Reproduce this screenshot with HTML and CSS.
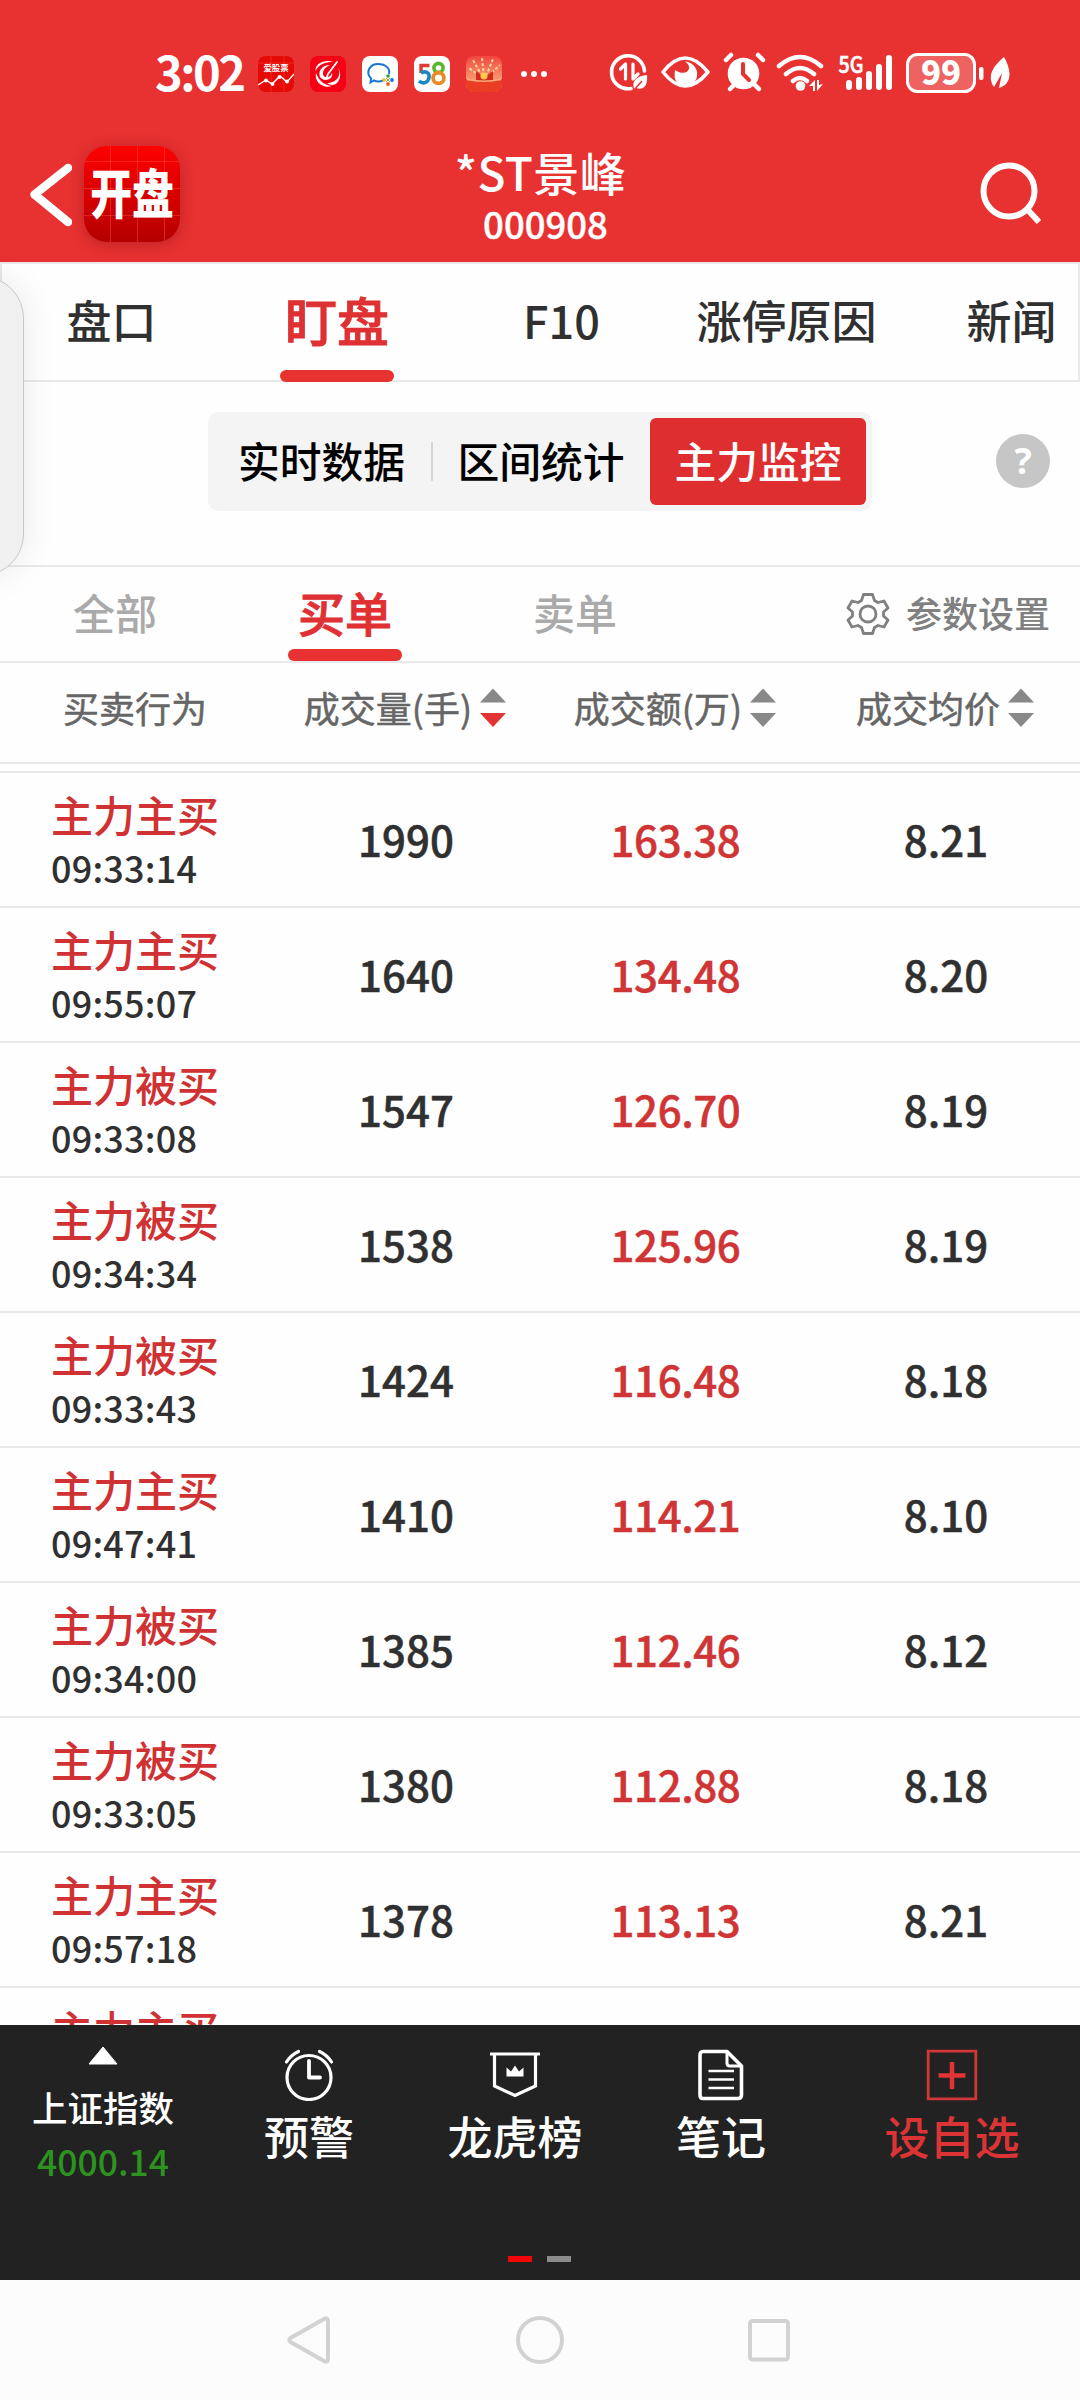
FILE: index.html
```html
<!DOCTYPE html>
<html lang="zh-CN">
<head>
<meta charset="utf-8">
<title>*ST景峰 000908</title>
<link rel="stylesheet" href="styles.css">
</head>
<body>
<div class="phone">
  <header class="top">
    <div class="status">
      <div class="clock">3:02</div>
      <div class="notifs">
        <svg class="app" viewBox="0 0 36 36"><rect width="36" height="36" rx="8" fill="#e50a06"/><path d="M0 7H36M13 0V36M26 0V36" stroke="#f43a30" stroke-width=".6"/><text x="18" y="15" font-size="8.4" font-weight="700" fill="#fff" text-anchor="middle">爱股票</text><path d="M0 29L8 24L14 28L22 20L29 26L36 18" fill="none" stroke="#fff" stroke-width="1.4"/><g fill="#fff"><circle cx="8" cy="24.500" r="1.900"/><circle cx="14.500" cy="28" r="1.900"/><circle cx="21.500" cy="21" r="1.900"/><circle cx="29" cy="25.500" r="1.900"/></g></svg>
        <svg class="app" viewBox="0 0 36 36"><rect width="36" height="36" rx="8" fill="#f50014"/><path d="M23 6C14 3 5 8 5.500 15C9 8 15 6 23 6ZM6 17C4 26 13 33 22 30C14 29 9 25 6 17ZM28 12C32 20 26 27 17 27C27 34 34 20 28 12ZM20 9C11 9 8 16 10 21C14 27 24 23 22 17C20 23 13 22 13 18C13 13 16 11 20 9Z" fill="#fff"/><path d="M27 6L18 18M18 18l-1 3" stroke="#fff" stroke-width="1.800" stroke-linecap="round"/></svg>
        <svg class="app" viewBox="0 0 36 36"><rect width="36" height="36" rx="8" fill="#fff"/><path d="M21 24.500C17 26 13 25 12 24.500L8.500 26.500L9 22.500C3 16 8 8 16 8C24 8 28.500 13 27 18" fill="none" stroke="#1677d2" stroke-width="2"/><path d="M24 22l4 4M28 22l-4 4" stroke="#8fb54a"/><circle cx="26" cy="20" r="1.800" fill="#2f9c45"/><circle cx="30" cy="24" r="1.900" fill="#1677d2"/><circle cx="26" cy="28" r="1.900" fill="#e95b2c"/><circle cx="22" cy="24" r="1.800" fill="#f2b51d"/></svg>
        <svg class="app" viewBox="0 0 36 36"><rect width="36" height="36" rx="8" fill="#fff"/><path d="M15.500 9.500H7V17" fill="none" stroke="#e03a36" stroke-width="3.400"/><path d="M7 17C12 14 16 17.500 15 21.500C14 27 9 28.500 5 25" fill="none" stroke="#1787c6" stroke-width="3.600"/><circle cx="24.500" cy="12" r="4.600" fill="none" stroke="#58b72c" stroke-width="3.600"/><circle cx="24.500" cy="22" r="5.400" fill="none" stroke="#e98a24" stroke-width="3.800"/></svg>
        <svg class="app" viewBox="0 0 36 36"><defs><linearGradient id="gift" x2="0" y2="1"><stop stop-color="#f2453f"/><stop offset=".6" stop-color="#f7936a"/></linearGradient></defs><rect width="36" height="36" rx="8" fill="url(#gift)"/><path d="M16 20L7 4M18 20L16 2M20 20L27 3M22 20L34 9M14 20L3 12" stroke="#ffd7a0" stroke-width="2" stroke-dasharray="3 2"/><path d="M10 15L18 21L27 15V25H10Z" fill="#d52820"/><circle cx="18" cy="20" r="3.500" fill="#ffcb48"/><path d="M0 23Q18 27 36 23V28Q36 36 28 36H8Q0 36 0 28Z" fill="#ea3d23"/><path d="M1 23.500Q18 27 35 23.500" fill="none" stroke="#ffb080" stroke-width="1.300"/></svg>
        <svg class="more" viewBox="0 0 28 8"><g fill="#fff"><circle cx="4" cy="4" r="3"/><circle cx="14" cy="4" r="3"/><circle cx="24" cy="4" r="3"/></g></svg>
      </div>
      <svg class="system" viewBox="0 0 410 44" width="410" height="44">
        <g transform="translate(10 0)">
          <g fill="none" stroke="#fff" stroke-linecap="round" stroke-linejoin="round">
            <path d="M21 37.500A16.500 16.500 0 1 1 34.500 20" stroke-width="3.600"/>
            <path d="M10.500 18L15.500 13V28M23 13V28L28 23" stroke-width="3.200"/>
            <path d="M53 21Q75 -7 98 21Q75 49 53 21Z" stroke-width="3.600"/>
            <path d="M116 9l5-5M153 9l-5-5" stroke-width="4.500"/>
            <path d="M120 38l7-7M149 38l-7-7" stroke-width="4.500"/>
            <path d="M169 15Q190 -3 211 15M176 23Q190 11 204 23M183 30Q190 24 197 30" stroke-width="4.500"/>
          </g>
          <path d="M24 38C21 29 28 25 37 24C38 34 34 40 26 37Z" fill="#fff"/><path d="M24 39L32 30" stroke="#e83131" stroke-width="1.500"/>
          <path d="M75 10.500C84 16 77 27 65 19C63 30 68 35 76 35C84 35 88 28 87 21C86 15 81 11 75 10.500Z" fill="#fff"/>
          <circle cx="133.500" cy="22.500" r="15.800" fill="#fff"/><path d="M133 13V23L139 29" fill="none" stroke="#e83131" stroke-width="4" stroke-linecap="round"/>
          <circle cx="190.500" cy="35" r="4.800" fill="#fff"/><path d="M199 35l6-6v11h-2v-5ZM213 33l-6 7v-11h2v5Z" fill="#fff"/>
        </g>
        <text x="238.500" y="21.500" class="net" textLength="25" lengthAdjust="spacingAndGlyphs">5G</text>
        <path d="M249 32V36M259 29V36M269 23V36M279 16V36M289 7V36" stroke="#fff" stroke-width="6" stroke-linecap="round"/>
        <rect x="307.500" y="3.500" width="67" height="37" rx="10" fill="#ee6262" stroke="#fff" stroke-width="3"/>
        <rect x="379" y="16" width="4.500" height="13" rx="2" fill="#fff"/>
        <text x="341" y="33.500" class="charge" text-anchor="middle">99</text>
        <path d="M404 6C412 20 412 33 399 37L402 22L394 36C387 26 392 16 404 6Z" fill="#fff"/>
      </svg>
    </div>
    <div class="titlebar">
      <svg class="back" viewBox="0 0 42 64"><path d="M38 5L4.500 31.500L38 59" fill="none" stroke="#fff" stroke-width="8.500" stroke-linecap="round" stroke-linejoin="round"/></svg>
      <div class="logo"><span>开盘</span></div>
      <div class="stock"><h1>*ST景峰</h1><p>000908</p></div>
      <svg class="search" viewBox="0 0 64 66"><circle cx="29" cy="31" r="25.500" fill="none" stroke="#fff" stroke-width="6"/><path d="M46 48L59 62" stroke="#fff" stroke-width="6"/></svg>
    </div>
  </header>

  <nav class="tabs">
    <div class="tabrow"><span>盘口</span><span class="on">盯盘</span><span>F10</span><span>涨停原因</span><span>新闻</span></div>
  </nav>

  <section class="modes">
    <div class="segment"><span>实时数据</span><i></i><span>区间统计</span><span class="picked">主力监控</span></div>
    <div class="help">?</div>
  </section>

  <nav class="filters">
    <span>全部</span><span class="on">买单</span><span>卖单</span>
    <div class="settings">
      <svg viewBox="0 0 44 44"><g fill="none" stroke="#808080" stroke-width="2.800" stroke-linejoin="round"><circle cx="22" cy="22" r="8"/><path d="M17.500 2.500H26.500L28.500 8.500L32 10.500L38 9L42 16L37.500 20V24L42 28L38 35L32 33.500L28.500 35.500L26.500 41.500H17.500L15.500 35.500L12 33.500L6 35L2 28L6.500 24V20L2 16L6 9L12 10.500L15.500 8.500Z"/></g></svg>
      参数设置
    </div>
  </nav>

  <div class="row head">
    <span>买卖行为</span>
    <span>成交量(手)<svg class="sort" viewBox="0 0 26 38"><path d="M13 0L26 14H0Z"/><path class="desc" d="M0 24.500H26L13 38.500Z"/></svg></span>
    <span>成交额(万)<svg class="sort" viewBox="0 0 26 38"><path d="M13 0L26 14H0ZM0 24.500H26L13 38.500Z"/></svg></span>
    <span>成交均价<svg class="sort" viewBox="0 0 26 38"><path d="M13 0L26 14H0ZM0 24.500H26L13 38.500Z"/></svg></span>
  </div>
  <main class="list">
    <div class="row"><div class="act"><b>主力主买</b><time>09:33:14</time></div><span>1990</span><span class="amt">163.38</span><span>8.21</span></div>
    <div class="row"><div class="act"><b>主力主买</b><time>09:55:07</time></div><span>1640</span><span class="amt">134.48</span><span>8.20</span></div>
    <div class="row"><div class="act"><b>主力被买</b><time>09:33:08</time></div><span>1547</span><span class="amt">126.70</span><span>8.19</span></div>
    <div class="row"><div class="act"><b>主力被买</b><time>09:34:34</time></div><span>1538</span><span class="amt">125.96</span><span>8.19</span></div>
    <div class="row"><div class="act"><b>主力被买</b><time>09:33:43</time></div><span>1424</span><span class="amt">116.48</span><span>8.18</span></div>
    <div class="row"><div class="act"><b>主力主买</b><time>09:47:41</time></div><span>1410</span><span class="amt">114.21</span><span>8.10</span></div>
    <div class="row"><div class="act"><b>主力被买</b><time>09:34:00</time></div><span>1385</span><span class="amt">112.46</span><span>8.12</span></div>
    <div class="row"><div class="act"><b>主力被买</b><time>09:33:05</time></div><span>1380</span><span class="amt">112.88</span><span>8.18</span></div>
    <div class="row"><div class="act"><b>主力主买</b><time>09:57:18</time></div><span>1378</span><span class="amt">113.13</span><span>8.21</span></div>
    <div class="row"><div class="act"><b>主力主买</b></div></div>
  </main>

  <footer class="dock">
    <div class="items">
      <div class="index"><svg viewBox="0 0 30 19"><path d="M15 1L29 18H1Z" fill="#fff" stroke="#fff" stroke-linejoin="round"/></svg><span>上证指数</span><em>4000.14</em></div>
      <div class="item"><svg viewBox="0 0 52 52"><g fill="none" stroke="#fff" stroke-width="3.200" stroke-linecap="round" stroke-linejoin="round"><circle cx="26" cy="28.500" r="22"/><path d="M26 12V28.500H37" stroke-width="3.800"/><path d="M3.500 13Q8 6 15.500 2.500M48.500 13Q44 6 36.500 2.500"/></g></svg>预警</div>
      <div class="item"><svg viewBox="0 0 52 52"><path d="M1 5H51M5.500 5V37L26 46.500L46.500 37V5" fill="none" stroke="#fff" stroke-width="3.200"/><path d="M17.500 27.500V18.500L22 22.500L26 16.500L30 22.500L34.500 18.500V27.500Z" fill="#fff"/></svg>龙虎榜</div>
      <div class="item"><svg viewBox="0 0 52 52"><g fill="none" stroke="#fff" stroke-width="3.600" stroke-linejoin="round"><path d="M32 2.500H8Q5 2.500 5 6V46Q5 49.500 8 49.500H43Q46.500 49.500 46.500 46V17Z"/><path d="M32 3V14Q32 17 35 17H46" stroke-width="3"/><path d="M13.500 22H39M13.500 30.500H39M13.500 39H39" stroke-width="2.700"/></g></svg>笔记</div>
      <div class="item add"><svg viewBox="0 0 52 52"><path d="M2.200 2.200H49.800V49.800H2.200Z" fill="none" stroke="#d23738" stroke-width="2.800"/><path d="M26 13V40M12.500 26.500H39.500" stroke="#e23434" stroke-width="4.500"/></svg>设自选</div>
    </div>
    <div class="pager"><i class="now"></i><i></i></div>
  </footer>

  <div class="sysnav">
    <svg viewBox="0 0 48 48"><path d="M42 5Q42 1 38 3L4.500 22Q2 24 4.500 26L38 45Q42 47 42 43Z"/></svg>
    <svg viewBox="0 0 48 48"><circle cx="24" cy="24" r="22"/></svg>
    <svg viewBox="0 0 48 48"><rect x="4" y="5" width="38" height="38.500" rx="2.500"/></svg>
  </div>
  <div class="drawer"></div>
</div>
</body>
</html>
```
FILE: styles.css
```css
* { box-sizing: border-box; }
body {
  margin: 0;
  font-family: "Noto Sans CJK SC", "Noto Sans", sans-serif;
  font-weight: 500;
  color: #303030;
}
h1, p { margin: 0; font-weight: 500; }
b, em, i { font-weight: 500; font-style: normal; }
svg { display: block; flex: none; }
.phone {
  position: relative;
  width: 1080px;
  height: 2400px;
  overflow: hidden;
  background: #fefefe;
  display: flex;
  flex-direction: column;
}

/* red header */
.top { height: 262px; background: #e83131; color: #fff; flex: none; }
.status { height: 125px; padding: 51px 70px 0 155px; display: flex; }
.clock { width: 103px; font-size: 47px; font-weight: 700; line-height: 40px; letter-spacing: -2.500px; white-space: nowrap; }
.notifs { display: flex; gap: 16px; padding-top: 5px; }
.app { width: 36px; height: 36px; }
.more { width: 28px; height: 8px; margin: 14px 0 0 2px; }
.system { margin-left: auto; }
.net { font: 500 22.500px "Noto Sans CJK SC", sans-serif; fill: #fff; stroke: #fff; stroke-width: .6px; }
.charge { font: 900 33px "Noto Sans CJK SC", sans-serif; fill: #fff; }
.titlebar { height: 137px; padding: 21px 36px 0 30px; display: flex; }
.back { width: 42px; height: 64px; margin-top: 17px; }
.logo {
  width: 96px;
  height: 96px;
  margin-left: 12px;
  border-radius: 23px;
  background:
    repeating-linear-gradient(90deg, transparent 0 12.500px, rgba(255,90,80,.4) 13px, transparent 13.500px),
    repeating-linear-gradient(0deg, transparent 0 12.500px, rgba(255,90,80,.4) 13px, transparent 13.500px),
    linear-gradient(#fe0000, #b40000);
  box-shadow: 0 2px 14px rgba(120,20,20,.4);
  display: flex;
  justify-content: center;
}
.logo span { font-size: 53px; font-weight: 900; line-height: 91px; white-space: nowrap; transform: scaleX(.79); }
.stock { flex: 1; text-align: center; padding-right: 79px; white-space: nowrap; }
.stock h1 { font-size: 46px; line-height: 50px; letter-spacing: .4px; }
.stock p { font-size: 36.500px; line-height: 46px; padding-left: 10px; margin-top: 5px; -webkit-text-stroke: .4px #fff; }
.search { width: 64px; height: 66px; margin: 14px 0 0; }

/* page tabs */
.tabs { height: 120px; flex: none; border: 2px solid #e9e9e9; clip-path: inset(0); }
.tabrow { display: grid; grid-template-columns: repeat(5, 225px); margin-left: -3px; width: 1125px; }
.tabrow span { height: 118px; line-height: 111px; font-size: 45px; text-align: center; }
.tabs .on, .filters .on { color: #df3133; display: flex; flex-direction: column; align-items: center; -webkit-text-stroke: .9px #df3133; }
.tabs .on { font-size: 52px; padding-left: 1px; }
.on::after { content: ""; width: 114px; height: 12px; border-radius: 6px; background: #e83131; margin-top: -5px; flex: none; }

/* mode switch */
.modes { height: 183px; flex: none; display: flex; padding: 30px 30px 0 208px; justify-content: space-between; }
.segment {
  width: 664px;
  height: 99px;
  border-radius: 11px;
  background: #f4f4f4;
  color: #000;
  font-size: 41.800px;
  line-height: 96px;
  display: flex;
  white-space: nowrap;
}
.segment span { width: 223px; text-align: center; }
.segment span:first-child { padding-left: 4px; }
.segment span:nth-child(3) { width: 218px; }
.segment i { width: 2px; height: 39px; margin-top: 30px; margin-right: -1px; background: #d6d6d6; }
.segment .picked { width: 216px; height: 87px; margin-top: 6px; line-height: 84px; border-radius: 6px; background: #df2e2f; color: #fff; }
.help { width: 54px; height: 54px; margin-top: 22px; border-radius: 50%; background: #c6c6c6; color: #fff; font: 700 36px/53px "Noto Sans", sans-serif; text-align: center; }

/* order filters */
.filters { height: 98px; flex: none; border-top: 2px solid #e9e9e9; border-bottom: 2px solid #e9e9e9; display: flex; color: #aaa; font-size: 42px; line-height: 89px; }
.filters > span { width: 230px; height: 94px; text-align: center; }
.filters .on { font-size: 47px; }
.filters .on::after { margin-top: -7px; }
.settings { margin-left: auto; padding-right: 30px; display: flex; align-items: center; gap: 16px; color: #808080; font-size: 36px; height: 91px; }
.settings svg { width: 44px; height: 44px; margin-top: 3px; }

/* orders table */
.row { display: grid; grid-template-columns: repeat(4, 270px); height: 135px; border-bottom: 2px solid #e9e9e9; text-align: center; }
.head { height: 101px; flex: none; color: #666; font-size: 36px; line-height: 86px; font-weight: 400; }
.head span { height: 87px; display: flex; justify-content: center; align-items: center; gap: 8px; -webkit-text-stroke: .5px #666; }
.sort { width: 26px; height: 39px; fill: #888; margin-top: 2px; }
.desc { fill: #e33434; }
.list { height: 1254px; flex: none; margin-top: 7px; border-top: 2px solid #e9e9e9; overflow: hidden; }
.list .row > span { font-size: 42px; line-height: 132px; padding-left: 2px; -webkit-text-stroke: .5px currentColor; }
.list .row .amt { color: #d03536; letter-spacing: -.4px; padding-left: 1px; }
.act { padding: 17px 0 0 51px; text-align: left; display: flex; flex-direction: column; }
.act b { font-size: 42px; line-height: 48px; color: #d03234; }
.act time { font-size: 36px; line-height: 48px; margin-top: 5px; letter-spacing: .2px; }

/* bottom dock */
.dock { height: 255px; flex: none; background: #222; color: #fff; }
.items { height: 231px; display: grid; grid-template-columns: 206px 206px 206px 206px 1fr; }
.index { display: flex; flex-direction: column; align-items: center; font-size: 35.500px; line-height: 50px; }
.index svg { width: 30px; height: 19px; margin: 21px 0 17px; }
.index em { color: #2e9220; line-height: 50px; margin-top: 4px; }
.item { display: flex; flex-direction: column; align-items: center; font-size: 45px; line-height: 60px; }
.item svg { width: 52px; height: 52px; margin: 24px 0 5px; }
.add { color: #dc3435; }
.pager { display: flex; justify-content: center; gap: 15px; padding-right: 1px; }
.pager i { width: 24px; height: 6px; background: #8b8b8b; }
.pager .now { background: #f40606; }

/* system navigation */
.sysnav { height: 120px; flex: none; background: #fcfcfc; display: flex; justify-content: center; align-items: center; gap: 182px; }
.sysnav svg { width: 48px; height: 48px; fill: none; stroke: #d2d2d2; stroke-width: 4px; }

/* edge drawer floating over the page */
.drawer { position: absolute; left: -60px; top: 276px; width: 84px; height: 300px; border: 1px solid #c9c9c9; border-radius: 50px; background: #f0f0f0; box-shadow: 0 0 34px rgba(0,0,0,.09); }
```
